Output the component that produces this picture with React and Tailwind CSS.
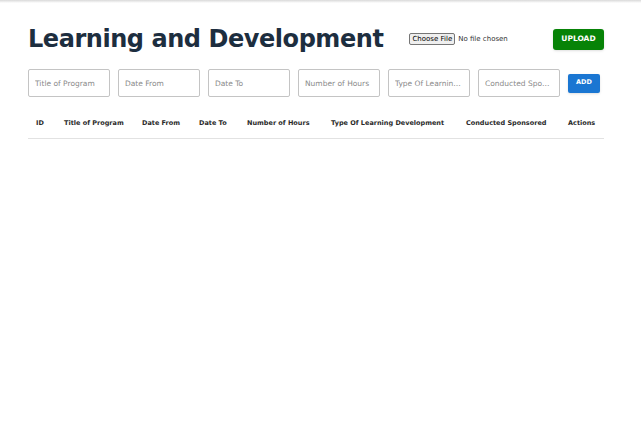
import React from "react";

const fields = [
  "Title of Program",
  "Date From",
  "Date To",
  "Number of Hours",
  "Type Of Learning Development",
  "Conducted Sponsored",
];

const columns = [
  { label: "ID", w: "w-[28px]" },
  { label: "Title of Program", w: "w-[78px]" },
  { label: "Date From", w: "w-[57px]" },
  { label: "Date To", w: "w-[48px]" },
  { label: "Number of Hours", w: "w-[84px]" },
  { label: "Type Of Learning Development", w: "w-[135px]" },
  { label: "Conducted Sponsored", w: "w-[102px]" },
  { label: "Actions", w: "w-[36px]" },
];

const App = () => {
  return (
    <div className="min-h-[445px] w-full bg-white font-['DejaVu_Sans',sans-serif]">
      <div className="h-[3px] bg-gradient-to-b from-[#d9d9d9] to-white" />
      <div className="ml-[28px] w-[576px] pt-[21px]">
        {/* Header */}
        <div className="flex items-center h-[30px]">
          <h1 className="text-[24px] font-bold leading-none tracking-[-0.45px] text-[#1d2e3f]">
            Learning and Development
          </h1>
          <div className="ml-[26px] flex items-center">
            <input
              type="file"
              className="w-[100px] text-[7px] text-[#333] file:mr-[3px] file:rounded-[2px] file:border file:border-[#767676] file:bg-[#efefef] file:px-[2px] file:text-[7px] file:text-black"
            />
          </div>
          <button className="ml-auto h-[21px] w-[51px] rounded-[3px] bg-[#078307] text-[7.5px] font-bold text-white shadow-sm">
            UPLOAD
          </button>
        </div>

        {/* Form */}
        <div className="mt-[15px] flex items-center">
          {fields.map((f) => (
            <input
              key={f}
              placeholder={f}
              className="mr-[8px] h-[28px] w-[82px] text-ellipsis rounded-[2px] border border-[#c4c4c4] px-[6px] text-[7.5px] text-[#333] placeholder:text-[#8a8a8a] outline-none"
            />
          ))}
          <button className="h-[19px] w-[32px] rounded-[2px] bg-[#1a76d2] text-[6.5px] font-bold text-white shadow-sm">
            ADD
          </button>
        </div>

        {/* Table */}
        <div className="mt-[12px] flex h-[30px] items-center border-b border-[#e2e2e2] pl-[8px] text-[6.5px] font-semibold text-[#2a2a2a]">
          {columns.map((c) => (
            <div key={c.label} className={c.w + " shrink-0 whitespace-nowrap"}>
              {c.label}
            </div>
          ))}
        </div>
      </div>
    </div>
  );
};

export default App;
